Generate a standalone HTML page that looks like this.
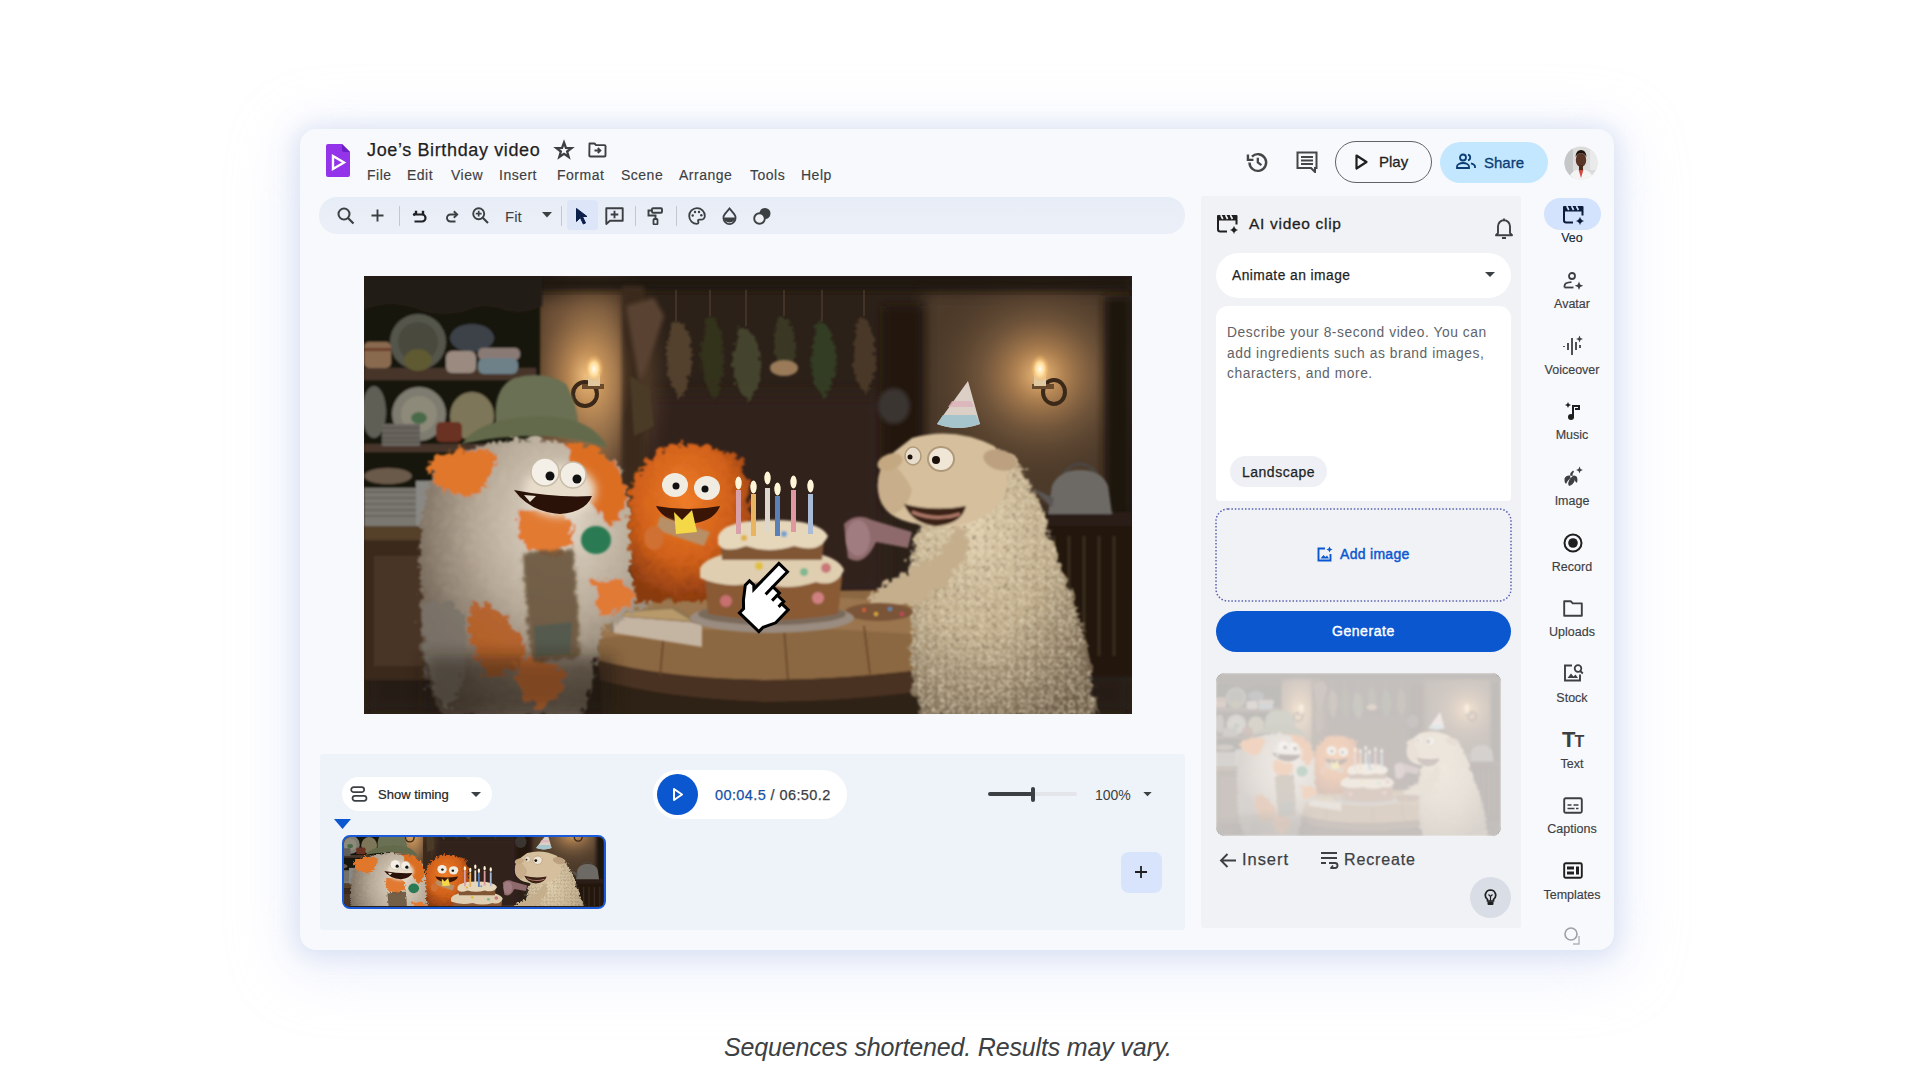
<!DOCTYPE html>
<html><head><meta charset="utf-8">
<style>
*{margin:0;padding:0;box-sizing:border-box}
html,body{width:1920px;height:1080px;overflow:hidden;background:#fff;font-family:"Liberation Sans",sans-serif;color:#1f1f1f}
.a{position:absolute}
.t{position:absolute;white-space:nowrap;line-height:1}
#win{left:300px;top:129px;width:1314px;height:821px;border-radius:16px;background:#f8f9fc;
 box-shadow:0 2px 22px 4px rgba(196,210,236,.55),0 12px 60px 12px rgba(205,216,245,.35)}
#toolbar{left:319px;top:197px;width:866px;height:37px;border-radius:18px;background:linear-gradient(180deg,#e7edf6,#ebeff8)}
#rpanel{left:1201px;top:196px;width:320px;height:732px;border-radius:3px;background:#f1f2f6}
#tl{left:320px;top:754px;width:865px;height:176px;border-radius:3px;background:#eef2f9}
svg{display:block}
.menu{font-size:14px;color:#3c4043;letter-spacing:.5px;-webkit-text-stroke:.15px #3c4043}
.rl{font-size:12.5px;color:#3c4043;text-align:center;-webkit-text-stroke:.15px #3c4043}
</style></head><body>
<div id="win" class="a"></div>
<div id="toolbar" class="a"></div>
<div id="rpanel" class="a"></div>
<div id="tl" class="a"></div>

<!-- logo -->
<svg class="a" style="left:326px;top:144px" width="24" height="33" viewBox="0 0 24 33">
 <defs><linearGradient id="lg" x1="0" y1="0" x2="1" y2="1"><stop offset="0" stop-color="#8a2ee8"/><stop offset="1" stop-color="#a035f0"/></linearGradient></defs>
 <path d="M2 0H16L24 8V31Q24 33 22 33H2Q0 33 0 31V2Q0 0 2 0Z" fill="#9333ea"/>
 <path d="M16 0L24 8H18Q16 8 16 6Z" fill="#6d1fc7"/>
 <path d="M7 12L18 18.5L7 25Z" fill="none" stroke="#fff" stroke-width="2.4" stroke-linejoin="miter"/>
</svg>
<div class="t" id="title" style="left:367px;top:141px;font-size:18px;color:#1f1f1f;letter-spacing:.63px;-webkit-text-stroke:.25px #1f1f1f">Joe’s Birthday video</div>
<!-- star -->
<svg class="a" style="left:552px;top:139px" width="24" height="22" viewBox="0 0 24 22"><polygon points="12.00,3.50 13.94,8.83 19.61,9.03 15.14,12.52 16.70,17.97 12.00,14.80 7.30,17.97 8.86,12.52 4.39,9.03 10.06,8.83" fill="none" stroke="#3c4043" stroke-width="2.3" stroke-linejoin="miter" stroke-miterlimit="6"/></svg>
<!-- folder move -->
<svg class="a" style="left:587px;top:141px" width="20" height="18" viewBox="0 0 20 18"><path d="M2.5 2.5H7.5l1.5 1.6h8.5q1 0 1 1V14.5q0 1-1 1H3.3q-1 0-1-1z" fill="none" stroke="#3c4043" stroke-width="1.9" stroke-linejoin="round"/><path d="M7.5 9.5h5.5M10.8 7l2.6 2.5-2.6 2.5" fill="none" stroke="#3c4043" stroke-width="1.8"/></svg>
<!-- menu -->
<div class="t menu" style="left:367px;top:168px">File</div>
<div class="t menu" style="left:407px;top:168px">Edit</div>
<div class="t menu" style="left:451px;top:168px">View</div>
<div class="t menu" style="left:499px;top:168px">Insert</div>
<div class="t menu" style="left:557px;top:168px">Format</div>
<div class="t menu" style="left:621px;top:168px">Scene</div>
<div class="t menu" style="left:679px;top:168px">Arrange</div>
<div class="t menu" style="left:750px;top:168px">Tools</div>
<div class="t menu" style="left:801px;top:168px">Help</div>
<!-- history -->
<svg class="a" style="left:1245px;top:150px" width="25" height="25" viewBox="0 0 24 24"><path d="M4.3 12a8 8 0 1 0 2.4-5.7" fill="none" stroke="#444746" stroke-width="2.3"/><path d="M2.8 4.2v5.3h5.3" fill="none" stroke="#444746" stroke-width="2.3"/><path d="M12.3 7.5V12l3.5 2.5" fill="none" stroke="#444746" stroke-width="2.2"/></svg>
<!-- comment -->
<svg class="a" style="left:1296px;top:151px" width="22" height="22" viewBox="0 0 22 22"><path d="M1.5 1.5h19v15.5h-1.5v4l-4-4H1.5z" fill="none" stroke="#444746" stroke-width="2"/><path d="M5 6h12M5 9.5h12M5 13h12" stroke="#444746" stroke-width="1.8"/></svg>
<!-- Play btn -->
<div class="a" style="left:1335px;top:141px;width:97px;height:42px;border:1.3px solid #5f6368;border-radius:21px"></div>
<svg class="a" style="left:1355px;top:154px" width="13" height="16" viewBox="0 0 13 16"><path d="M1.5 1.5L11.5 8L1.5 14.5Z" fill="none" stroke="#1f1f1f" stroke-width="2.2" stroke-linejoin="round"/></svg>
<div class="t" id="playtxt" style="left:1379px;top:154px;font-size:15px;color:#1f1f1f;-webkit-text-stroke:.3px #1f1f1f">Play</div>
<!-- Share btn -->
<div class="a" style="left:1440px;top:142px;width:108px;height:41px;border-radius:21px;background:#c2e7ff"></div>
<svg class="a" style="left:1456px;top:153px" width="20" height="16" viewBox="0 0 20 16"><circle cx="7" cy="4.5" r="3" fill="none" stroke="#0b3d75" stroke-width="1.8"/><path d="M1 15v-1.5c0-2 3-3.5 6-3.5s6 1.5 6 3.5V15z" fill="none" stroke="#0b3d75" stroke-width="1.8"/><path d="M12 1.6a3 3 0 0 1 0 5.8M15 10.3c2 .6 4 1.6 4 3.2V15" fill="none" stroke="#0b3d75" stroke-width="1.8"/></svg>
<div class="t" id="sharetxt" style="left:1484px;top:155px;font-size:15px;color:#0b3d75;-webkit-text-stroke:.3px #0b3d75">Share</div>
<!-- avatar -->
<svg class="a" style="left:1564px;top:146px" width="34" height="34" viewBox="0 0 34 34"><defs><clipPath id="avc"><circle cx="17" cy="17" r="16.5"/></clipPath></defs>
<g clip-path="url(#avc)"><rect width="34" height="34" fill="#dcdcdc"/><rect x="0" y="0" width="9" height="34" fill="#c4c6c8"/><rect x="26" y="4" width="8" height="20" fill="#eaeaea"/>
<path d="M4 34 Q6 24 17 23 Q28 24 30 34Z" fill="#f4f4f4"/><path d="M14.5 23.5 L17 32 L19.5 23.5Z" fill="#d04a40"/>
<ellipse cx="17" cy="14" rx="5.2" ry="7" fill="#5a3424"/><path d="M11.5 11 Q12 4 17 4 Q22 4 22.5 11 Q20 7 17 7 Q14 7 11.5 11Z" fill="#1e120c"/><rect x="15" y="19" width="4" height="5" fill="#4a2a1c"/></g></svg>

<!-- toolbar icons -->
<svg class="a" style="left:336px;top:206px" width="20" height="20" viewBox="0 0 20 20"><circle cx="8" cy="8" r="5.5" fill="none" stroke="#3c4043" stroke-width="2"/><path d="M12 12l5.5 5.5" stroke="#3c4043" stroke-width="2.2"/></svg>
<svg class="a" style="left:371px;top:209px" width="13" height="13" viewBox="0 0 13 13"><path d="M6.5 0.5v12M0.5 6.5h12" stroke="#3c4043" stroke-width="1.9"/></svg>
<div class="a" style="left:399px;top:206px;width:1px;height:20px;background:#c4c7cc"></div>
<svg class="a" style="left:411px;top:207px" width="16" height="17" viewBox="0 0 16 17"><path d="M5 3.8v4.2M12 3.8v4.2" stroke="#202124" stroke-width="2.4"/><path d="M2 7.5H11a3.5 3.5 0 0 1 0 7H3.5" fill="none" stroke="#202124" stroke-width="2.2"/><path d="M1.5 7.5l2.5-1.8v3.6z" fill="#202124"/></svg>
<svg class="a" style="left:444px;top:207px" width="16" height="17" viewBox="0 0 16 17"><path d="M13 7.5H6.5a3.5 3.5 0 0 0 0 7H11.5" fill="none" stroke="#3c4043" stroke-width="1.9"/><path d="M9.8 4.2L13.2 7.5L9.8 10.8" fill="none" stroke="#3c4043" stroke-width="1.9"/></svg>
<svg class="a" style="left:472px;top:207px" width="17" height="17" viewBox="0 0 17 17"><circle cx="6.7" cy="6.7" r="5.5" fill="none" stroke="#3c4043" stroke-width="1.9"/><path d="M10.5 10.5l5.5 5.5" stroke="#3c4043" stroke-width="2.1"/><path d="M6.7 3.8v5.8M3.8 6.7h5.8" stroke="#3c4043" stroke-width="1.7"/></svg>
<div class="t" style="left:505px;top:209px;font-size:15px;color:#3c4043">Fit</div>
<svg class="a" style="left:542px;top:212px" width="10" height="6" viewBox="0 0 10 6"><path d="M0 0h10L5 5.5z" fill="#3c4043"/></svg>
<div class="a" style="left:561px;top:206px;width:1px;height:20px;background:#c4c7cc"></div>
<div class="a" style="left:567px;top:200px;width:31px;height:30px;border-radius:4px;background:#dde5f8"></div>
<svg class="a" style="left:575px;top:207px" width="14" height="18" viewBox="0 0 14 18"><path d="M1.5 1.5L12 9.5H7.5L10.5 16l-2.2 1L5.3 10.6 1.5 14.5z" fill="#0b1f4a" stroke="#0b1f4a" stroke-width="1" stroke-linejoin="round"/></svg>
<svg class="a" style="left:605px;top:207px" width="19" height="18" viewBox="0 0 19 18"><path d="M1.3 1.3h16.4v12.5H5L1.3 17z" fill="none" stroke="#3c4043" stroke-width="1.9" stroke-linejoin="round"/><path d="M9.5 3.8v7.5M5.7 7.5h7.6" stroke="#3c4043" stroke-width="1.9"/></svg>
<div class="a" style="left:635px;top:206px;width:1px;height:20px;background:#c4c7cc"></div>
<svg class="a" style="left:647px;top:207px" width="16" height="18" viewBox="0 0 16 18"><rect x="5" y="1.2" width="10" height="4.6" rx="1" fill="none" stroke="#3c4043" stroke-width="1.9"/><path d="M5 3.5H1.5v5h7v3.5" fill="none" stroke="#3c4043" stroke-width="1.9"/><rect x="6.5" y="12" width="4" height="5.3" rx=".8" fill="none" stroke="#3c4043" stroke-width="1.8"/></svg>
<div class="a" style="left:676px;top:206px;width:1px;height:20px;background:#c4c7cc"></div>
<svg class="a" style="left:688px;top:207px" width="18" height="18" viewBox="0 0 18 18"><path d="M9 1.2a7.8 7.8 0 0 0 0 15.6c1 0 1.5-.7 1.5-1.5 0-.5-.3-.8-.4-1.2-.3-.7.2-1.5 1-1.5h2a3.7 3.7 0 0 0 3.7-3.7C16.8 4.5 13.3 1.2 9 1.2z" fill="none" stroke="#3c4043" stroke-width="1.8"/><circle cx="4.7" cy="8.5" r="1.2" fill="#3c4043"/><circle cx="7" cy="5" r="1.2" fill="#3c4043"/><circle cx="11" cy="5" r="1.2" fill="#3c4043"/><circle cx="13.3" cy="8.3" r="1.2" fill="#3c4043"/></svg>
<svg class="a" style="left:722px;top:207px" width="15" height="18" viewBox="0 0 15 18"><path d="M7.5 1.5L2.8 7.2a6 6 0 1 0 9.4 0z" fill="none" stroke="#3c4043" stroke-width="1.9"/><path d="M1.6 10.5h11.8a6 6 0 0 1-11.8 0z" fill="#3c4043"/></svg>
<svg class="a" style="left:753px;top:207px" width="19" height="18" viewBox="0 0 19 18"><circle cx="12" cy="6.5" r="5.5" fill="#3c4043"/><circle cx="6.5" cy="11.5" r="5.3" fill="#eef0f6" stroke="#3c4043" stroke-width="1.9"/></svg>
<svg width="0" height="0" style="position:absolute">
<defs>
<filter id="bl1" x="-20%" y="-20%" width="140%" height="140%"><feGaussianBlur stdDeviation="1"/></filter>
<filter id="bl2" x="-20%" y="-20%" width="140%" height="140%"><feGaussianBlur stdDeviation="2"/></filter>
<filter id="bl4" x="-30%" y="-30%" width="160%" height="160%"><feGaussianBlur stdDeviation="4"/></filter>
<filter id="bl8" x="-50%" y="-50%" width="200%" height="200%"><feGaussianBlur stdDeviation="8"/></filter>
<filter id="fur" x="-20%" y="-20%" width="140%" height="140%"><feTurbulence type="turbulence" baseFrequency="0.09" numOctaves="2" seed="3"/><feDisplacementMap in="SourceGraphic" scale="14" xChannelSelector="R" yChannelSelector="G"/><feGaussianBlur stdDeviation="1.2"/></filter>
<filter id="furS" x="-20%" y="-20%" width="140%" height="140%"><feTurbulence type="turbulence" baseFrequency="0.15" numOctaves="2" seed="7"/><feDisplacementMap in="SourceGraphic" scale="8" xChannelSelector="R" yChannelSelector="G"/><feGaussianBlur stdDeviation=".8"/></filter>
<radialGradient id="glowL" cx="0.5" cy="0.5" r="0.5"><stop offset="0" stop-color="#e8b878"/><stop offset=".25" stop-color="#b88c5c" stop-opacity=".9"/><stop offset=".6" stop-color="#7a5a3c" stop-opacity=".6"/><stop offset="1" stop-color="#4a3424" stop-opacity="0"/></radialGradient>
<radialGradient id="glowR" cx="0.5" cy="0.5" r="0.5"><stop offset="0" stop-color="#d8a870"/><stop offset=".25" stop-color="#a07850" stop-opacity=".85"/><stop offset=".6" stop-color="#6a5038" stop-opacity=".55"/><stop offset="1" stop-color="#3e2d20" stop-opacity="0"/></radialGradient>
<radialGradient id="flame" cx="0.5" cy="0.6" r="0.5"><stop offset="0" stop-color="#fffdf0"/><stop offset=".45" stop-color="#ffdc98"/><stop offset="1" stop-color="#e8a050" stop-opacity="0"/></radialGradient>
<radialGradient id="furW" cx="0.6" cy="0.3" r="0.8"><stop offset="0" stop-color="#e4dacb"/><stop offset=".45" stop-color="#b6a896"/><stop offset="1" stop-color="#54483c"/></radialGradient>
<radialGradient id="furO" cx="0.45" cy="0.35" r="0.65"><stop offset="0" stop-color="#f07d28"/><stop offset=".6" stop-color="#d0601a"/><stop offset="1" stop-color="#8a3a10"/></radialGradient>
<radialGradient id="wool" cx="0.35" cy="0.3" r="0.8"><stop offset="0" stop-color="#dccaa8"/><stop offset=".5" stop-color="#bba886"/><stop offset="1" stop-color="#6e5e4a"/></radialGradient>
<linearGradient id="tableG" x1="0" y1="0" x2="0" y2="1"><stop offset="0" stop-color="#8e6a46"/><stop offset=".55" stop-color="#76543a"/><stop offset=".75" stop-color="#4a321f"/><stop offset="1" stop-color="#2e1f14"/></linearGradient>
<pattern id="curls" width="10" height="10" patternUnits="userSpaceOnUse"><circle cx="5" cy="5" r="3.2" fill="none" stroke="#f2e6cc" stroke-width="1.4" opacity=".6"/><circle cx="0" cy="0" r="2.8" fill="none" stroke="#6e5c46" stroke-width="1.3" opacity=".55"/><circle cx="10" cy="10" r="2.8" fill="none" stroke="#6e5c46" stroke-width="1.3" opacity=".55"/></pattern>
<symbol id="photo" viewBox="0 0 768 438" preserveAspectRatio="none">
 <rect width="768" height="438" fill="#2c2119"/>
 <g filter="url(#bl8)">
  <rect x="0" y="0" width="178" height="438" fill="#231912"/>
  <rect x="174" y="24" width="80" height="250" fill="#6a4e34"/>
  <rect x="280" y="120" width="240" height="200" fill="#30241b"/>
  <rect x="560" y="16" width="200" height="215" fill="#4e3a2a"/>
  <rect x="0" y="395" width="768" height="43" fill="#251a12"/>
 </g>
 <ellipse cx="229" cy="105" rx="80" ry="150" fill="url(#glowL)"/>
 <ellipse cx="676" cy="100" rx="130" ry="120" fill="url(#glowR)"/>
 <rect x="0" y="0" width="768" height="14" fill="#1e150f" filter="url(#bl4)"/>
 <!-- beams -->
 <rect x="258" y="10" width="22" height="270" fill="#3a2a1c" filter="url(#bl2)"/>
 <path d="M262 30 L290 22 L300 40 L276 110Z" fill="#5a4230" filter="url(#bl2)"/>
 <rect x="519" y="30" width="40" height="200" fill="#21170f" filter="url(#bl4)"/>
 <ellipse cx="530" cy="130" rx="16" ry="18" fill="#3a3430" filter="url(#bl2)"/>
 <rect x="740" y="20" width="28" height="300" fill="#1e150f" filter="url(#bl4)"/>
 <!-- shelves -->
 <g filter="url(#bl1)">
  <rect x="0" y="0" width="176" height="270" fill="#18120d"/>
  <path d="M0 0H178V30Q160 40 140 34Q120 26 100 36Q70 42 50 32Q25 24 0 34Z" fill="#241a12"/>
  <rect x="0" y="92" width="172" height="12" fill="#46362a"/>
  <rect x="0" y="168" width="172" height="8" fill="#46362a"/>
  <rect x="0" y="250" width="180" height="14" fill="#54402c"/>
  <rect x="0" y="264" width="165" height="140" fill="#3a2a1e"/>
  <rect x="10" y="280" width="52" height="110" fill="#4a3626"/>
  <rect x="72" y="280" width="52" height="110" fill="#4a3626"/>
  <ellipse cx="54" cy="66" rx="28" ry="28" fill="#55564c"/>
  <ellipse cx="54" cy="66" rx="20" ry="20" fill="#48483e"/>
  <ellipse cx="108" cy="62" rx="22" ry="14" fill="#3c4248"/>
  <rect x="0" y="66" width="27" height="26" rx="5" fill="#8a6a50"/>
  <rect x="0" y="72" width="27" height="3" fill="#6a3a28"/>
  <ellipse cx="54" cy="84" rx="14" ry="11" fill="#5e5a30"/>
  <rect x="82" y="75" width="30" height="22" rx="6" fill="#9a8a80"/>
  <rect x="114" y="72" width="42" height="12" rx="5" fill="#8a7a74"/>
  <rect x="114" y="82" width="40" height="16" rx="6" fill="#6e8088"/>
  <ellipse cx="10" cy="136" rx="12" ry="26" fill="#5e5e56"/>
  <ellipse cx="55" cy="138" rx="27" ry="27" fill="#7e7c70"/>
  <ellipse cx="55" cy="138" rx="18" ry="18" fill="#8e8a7a"/>
  <ellipse cx="55" cy="142" rx="8" ry="6" fill="#4a6a48"/>
  <ellipse cx="108" cy="140" rx="22" ry="24" fill="#7e7658"/>
  <rect x="18" y="148" width="38" height="22" fill="#6a6660"/>
  <path d="M18 152H56M18 157H56M18 162H56M18 166H56" stroke="#4a4640" stroke-width="1"/>
  <rect x="72" y="146" width="26" height="20" rx="5" fill="#6a3020"/>
  <rect x="0" y="212" width="55" height="38" fill="#7a7870"/>
  <path d="M0 216H55M0 222H55M0 228H55M0 234H55M0 240H55" stroke="#55534c" stroke-width="1"/>
  <ellipse cx="24" cy="200" rx="24" ry="8" fill="#6a5a48"/>
  <rect x="52" y="205" width="20" height="45" fill="#8a8884"/>
 </g>
 <!-- herbs -->
 <g stroke="#4a3a2a" stroke-width="1.5">
  <path d="M312 14V45M346 14V40M382 14V50M420 14V40M458 14V45M500 14V40"/>
 </g>
 <g filter="url(#furS)" opacity=".85">
  <path d="M306 45 Q318 40 324 60 Q330 95 314 122 Q298 100 300 70Z" fill="#5a4630"/>
  <path d="M340 40 Q352 36 356 60 Q362 100 348 124 Q332 100 336 66Z" fill="#34361f"/>
  <path d="M372 50 Q386 46 392 70 Q400 100 382 124 Q364 104 368 76Z" fill="#4a4c30"/>
  <path d="M412 40 Q424 36 428 56 Q434 80 420 96 Q406 84 408 60Z" fill="#3e3e28"/>
  <path d="M450 45 Q462 40 468 66 Q474 100 458 120 Q442 104 446 72Z" fill="#344226"/>
  <path d="M492 40 Q504 36 508 62 Q514 96 500 116 Q484 100 488 66Z" fill="#503c2a"/>
 </g>
 <g filter="url(#bl1)"><ellipse cx="420" cy="92" rx="14" ry="8" fill="#9a7a58"/>
  <path d="M266 100 L285 110 L290 150 L270 160Z" fill="#4a3a28"/></g>
 <!-- lamps -->
 <radialGradient id="hot" cx="0.5" cy="0.5" r="0.5"><stop offset="0" stop-color="#f0c080" stop-opacity=".95"/><stop offset=".4" stop-color="#c08a50" stop-opacity=".55"/><stop offset="1" stop-color="#805a38" stop-opacity="0"/></radialGradient>
 <ellipse cx="222" cy="100" rx="48" ry="70" fill="url(#hot)"/>
 <ellipse cx="676" cy="98" rx="60" ry="60" fill="url(#hot)" opacity=".8"/>
 
 <ellipse cx="221" cy="118" rx="12" ry="12" fill="none" stroke="#3a2818" stroke-width="4"/>
 <rect x="218" y="108" width="22" height="5" fill="#6a4a2c"/>
 <rect x="224" y="98" width="12" height="12" fill="#e0c8a0"/>
 <ellipse cx="230" cy="90" rx="10" ry="15" fill="url(#flame)"/>
 <ellipse cx="690" cy="116" rx="11" ry="12" fill="none" stroke="#3a2818" stroke-width="4"/>
 <rect x="668" y="108" width="22" height="5" fill="#6a4a2c"/>
 <rect x="670" y="98" width="12" height="12" fill="#e0c8a0"/>
 <ellipse cx="676" cy="90" rx="10" ry="15" fill="url(#flame)"/>
 <!-- kettle & counter -->
 <g filter="url(#bl1)">
  <rect x="590" y="236" width="178" height="14" fill="#2a1f17"/>
  <rect x="680" y="250" width="88" height="150" fill="#231811"/>
  <path d="M690 260V380M705 260V380M720 260V380M735 260V380M750 260V380" stroke="#3a2c22" stroke-width="3"/>
  <path d="M688 210 Q695 194 716 194 Q738 194 744 210 L748 238 L684 238Z" fill="#6d6a66"/>
  <path d="M700 196 Q716 180 732 196" fill="none" stroke="#4a4744" stroke-width="3"/>
  <path d="M668 212 L690 222 L688 232Z" fill="#5a5754"/>
  <rect x="610" y="190" width="26" height="46" rx="4" fill="#3c2c20"/>
 </g>
 <!-- table -->
 <g filter="url(#bl1)">
  <path d="M232 336 Q240 318 330 316 L540 314 Q572 318 574 340 L572 392 Q480 404 400 404 Q290 402 234 386Z" fill="#8c6842"/>
  <path d="M240 330 Q300 322 400 320 Q500 320 566 330 L570 360 Q480 352 400 352 Q300 354 238 362Z" fill="#9e7850" opacity=".8"/>
  <path d="M234 384 Q300 402 400 404 Q490 404 572 392 L570 414 Q480 426 400 426 Q290 422 236 404Z" fill="#4a3220"/>
  <path d="M236 404 Q300 422 400 426 Q490 426 570 414 L568 438 L238 438Z" fill="#2e2016"/>
  <path d="M300 356 L296 400M420 352 L424 404M500 350 L506 398" stroke="#5e4028" stroke-width="1.5"/>
 </g>
 <!-- matchbox -->
 <g filter="url(#bl1)">
  <path d="M250 340 L338 347 L338 371 L250 357Z" fill="#c4b4a2"/>
  <path d="M256 334 L311 331 L338 347 L250 340Z" fill="#8e7452"/>
  <path d="M262 336 L308 333 L328 345 L258 340Z" fill="#b89a6a"/>
  <path d="M250 340 L250 357 L246 354 L246 338Z" fill="#8a7a68"/>
 </g>
 <!-- left monster -->
 <g filter="url(#fur)">
  <path d="M64 196 Q84 166 140 160 Q222 154 254 190 Q268 236 264 296 Q278 318 282 324 Q250 340 236 350 Q226 400 214 438 L74 438 Q48 392 54 322 Q46 258 64 196Z" fill="url(#furW)"/>
  <path d="M58 186 Q82 164 126 172 Q132 196 108 214 Q78 222 58 186Z" fill="#e0772a"/>
  <path d="M196 162 Q244 166 258 204 Q262 236 244 246 Q214 224 196 162Z" fill="#dc6e24"/>
  <path d="M150 232 Q180 226 204 240 Q210 266 190 276 Q160 278 150 256Z" fill="#e27a30"/>
  <path d="M104 322 Q142 326 160 372 Q150 398 118 396 Q96 360 104 322Z" fill="#b85c1e" opacity=".85"/>
  <path d="M56 330 Q74 310 96 334 Q104 392 82 430 Q54 410 56 330Z" fill="#7a7268" opacity=".9"/>
  <path d="M226 300 Q256 296 268 318 Q258 336 232 334Z" fill="#e07a34"/>
  <path d="M150 380 Q180 374 198 394 Q196 424 170 428 Q146 416 150 380Z" fill="#d27030"/>
 </g>
 <g filter="url(#bl1)">
  <path d="M156 276 L208 270 L214 380 L166 384Z" fill="#6a563e" opacity=".9" filter="url(#furS)"/>
  <path d="M170 350 L208 346 L206 378 L172 380Z" fill="#3e5a58" opacity=".5"/>
 </g>
 <rect x="60" y="380" width="190" height="58" fill="#1e150e" opacity=".45" filter="url(#bl8)"/>
 <ellipse cx="232" cy="264" rx="15" ry="14" fill="#2a7a52" filter="url(#bl1)"/>
 <!-- hat -->
 <g filter="url(#bl1)">
  <path d="M132 150 Q128 112 150 102 Q180 94 202 108 Q214 130 214 150Z" fill="#6a7052"/>
  <path d="M98 168 Q115 142 175 140 Q228 140 244 172 Q205 160 175 160 Q130 160 98 168Z" fill="#646a4c"/>
 </g>
 <!-- left monster face -->
 <ellipse cx="196" cy="215" rx="36" ry="26" fill="#e8dccb" filter="url(#bl4)"/>
 <ellipse cx="181" cy="196" rx="14" ry="14" fill="#f4f0e8" stroke="#c8bca8" stroke-width="1.5"/>
 <ellipse cx="209" cy="199" rx="13" ry="13" fill="#f2eee6" stroke="#c8bca8" stroke-width="1.5"/>
 <circle cx="186" cy="200" r="4.5" fill="#111"/>
 <circle cx="213" cy="203" r="4.5" fill="#111"/>
 <path d="M150 214 Q190 222 228 220 Q222 236 196 238 Q166 236 150 214Z" fill="#2a1208"/><path d="M160 219 L166 226 L172 220Z" fill="#e8e0d0"/>
 <!-- orange monster -->
 <g filter="url(#fur)">
  <path d="M262 250 Q256 190 296 170 Q336 156 372 178 Q388 210 382 260 Q380 300 372 322 L268 322 Q262 290 262 250Z" fill="url(#furO)"/>
 </g>
 <ellipse cx="311" cy="209" rx="13" ry="12" fill="#f1ece2"/>
 <ellipse cx="343" cy="212" rx="13" ry="12" fill="#f1ece2"/>
 <circle cx="312" cy="210" r="3.5" fill="#111"/>
 <circle cx="341" cy="213" r="3.5" fill="#111"/>
 <path d="M292 230 Q325 236 356 230 Q350 246 325 248 Q300 246 292 230Z" fill="#3a1506"/>
 <path d="M296 240 L346 256 L340 270 L292 254Z" fill="#b89068" filter="url(#bl1)"/>
 <path d="M310 236 L318 244 L328 234 L333 256 L312 258Z" fill="#f4d848"/>
 <ellipse cx="290" cy="262" rx="10" ry="12" fill="#d07030" filter="url(#bl1)"/>
 <!-- sheep -->
 <g filter="url(#fur)">
  <path d="M570 185 Q610 155 648 180 Q676 222 690 280 Q720 340 730 438 L556 438 Q540 400 546 350 Q536 300 550 252Z" fill="url(#wool)"/>
 </g>
 <path d="M570 185 Q610 155 648 180 Q676 222 690 280 Q720 340 730 438 L556 438 Q540 400 546 350 Q536 300 550 252Z" fill="url(#curls)" filter="url(#furS)"/>
 <g filter="url(#fur)">
  <path d="M500 318 Q520 300 548 290 Q575 276 590 246 Q604 250 600 270 Q590 300 560 318 Q535 330 505 330Z" fill="#c4ae8c"/>
 </g>
 <g filter="url(#bl1)">
  <path d="M548 162 Q590 150 630 170 Q650 190 640 222 Q622 246 590 250 Q560 252 538 244 Q516 236 514 214 Q512 190 530 176Z" fill="#d6bf9c"/>
  <path d="M514 214 Q512 194 526 186 Q540 196 548 214 Q544 232 530 238 Q516 232 514 214Z" fill="#c8ae8a"/>
  <ellipse cx="526" cy="186" rx="13" ry="8" fill="#c4a882" transform="rotate(-20 526 186)"/>
  <ellipse cx="636" cy="184" rx="17" ry="10" fill="#bca080" transform="rotate(15 636 184)"/>
  <path d="M540 228 Q570 236 602 230 Q598 248 572 250 Q548 248 540 228Z" fill="#3a2014"/>
  <path d="M548 236 Q572 246 596 238" fill="none" stroke="#b07a6a" stroke-width="3"/>
 </g>
 <ellipse cx="577" cy="183" rx="13" ry="12" fill="#efe6d6" stroke="#b09a7a" stroke-width="2"/>
 <circle cx="572" cy="184" r="4" fill="#1a1008"/>
 <ellipse cx="549" cy="180" rx="8" ry="9" fill="#e8dece" stroke="#b09a7a" stroke-width="1.5"/>
 <circle cx="546" cy="181" r="2.5" fill="#1a1008"/>
 <!-- party hat -->
 <path d="M604 105 L573 148 Q594 156 616 148Z" fill="#dccfc6"/>
 <path d="M579 139 L612 139 L616 148 Q594 156 573 148Z" fill="#a6c4cc"/>
 <path d="M588 125 L607 125 L610 131 L584 131Z" fill="#dcb0b8" opacity=".8"/>
 <!-- party horn -->
 <path d="M480 248 Q492 236 508 244 L548 256 L544 272 L512 266 Q500 292 484 282Z" fill="#8e6a6c" filter="url(#bl1)"/>
 <ellipse cx="494" cy="262" rx="12" ry="18" fill="#a07c80" filter="url(#bl1)"/>
 <!-- confetti -->
 <g filter="url(#bl1)">
  <ellipse cx="515" cy="336" rx="34" ry="9" fill="#7a5438"/>
  <circle cx="500" cy="334" r="2" fill="#d86040"/><circle cx="512" cy="338" r="2" fill="#e0b040"/><circle cx="526" cy="333" r="2" fill="#5a90c0"/><circle cx="538" cy="338" r="2" fill="#d04060"/>
 </g>
 <!-- cake -->
 <g filter="url(#bl1)">
  <ellipse cx="408" cy="342" rx="82" ry="15" fill="#9a8c80"/>
  <ellipse cx="408" cy="338" rx="74" ry="11" fill="#7a6a5c"/>
  <path d="M340 292 Q340 282 360 282 L458 282 Q478 286 478 302 L474 338 Q410 350 344 338Z" fill="#8a5a36"/>
  <path d="M336 292 Q345 274 410 274 Q472 274 480 294 Q472 312 452 306 Q422 316 396 306 Q364 314 336 302Z" fill="#e0ceb0"/>
  <path d="M356 260 Q364 247 408 247 Q455 247 460 264 L458 284 L358 284Z" fill="#805636"/>
  <path d="M354 260 Q360 244 408 244 Q456 244 464 260 Q456 278 430 270 Q405 278 382 270 Q360 278 354 268Z" fill="#e6d6ba"/>
  <circle cx="362" cy="325" r="6" fill="#c87070"/>
  <circle cx="454" cy="322" r="6" fill="#d08080"/>
  <circle cx="462" cy="292" r="5" fill="#c87878"/>
  <circle cx="395" cy="290" r="4" fill="#e0c040"/>
  <circle cx="440" cy="296" r="4" fill="#80b890"/>
  <circle cx="380" cy="262" r="3" fill="#e0b040"/>
  <circle cx="420" cy="258" r="3" fill="#70a0d0"/>
 </g>
 <!-- candles -->
 <g>
  <rect x="372" y="214" width="5" height="44" fill="#d8a0a8"/>
  <rect x="387" y="218" width="5" height="42" fill="#e8b460"/>
  <rect x="401" y="212" width="5" height="44" fill="#dcd8d0"/>
  <rect x="411" y="220" width="5" height="40" fill="#5a80b8"/>
  <rect x="427" y="214" width="5" height="42" fill="#e098a0"/>
  <rect x="444" y="218" width="5" height="40" fill="#a8bcd8"/>
  <ellipse cx="374.5" cy="207" rx="3.2" ry="6.5" fill="#fff6d8"/>
  <ellipse cx="389.5" cy="211" rx="3.2" ry="6.5" fill="#fff6d8"/>
  <ellipse cx="403.5" cy="202" rx="3.2" ry="6.5" fill="#fff6d8"/>
  <ellipse cx="413.5" cy="213" rx="3.2" ry="6.5" fill="#fff6d8"/>
  <ellipse cx="429.5" cy="206" rx="3.2" ry="6.5" fill="#fff6d8"/>
  <ellipse cx="446.5" cy="210" rx="3.2" ry="6.5" fill="#fff6d8"/>
 </g>
</symbol>
</defs></svg>

<!-- main photo -->
<svg class="a" style="left:364px;top:276px" width="768" height="438" viewBox="0 0 768 438"><use href="#photo" width="768" height="438"/><!-- cursor hand -->
 <g transform="translate(402.7,319.4) rotate(44) scale(3) translate(-8.5,-10.5)">
  <path d="M4 0H8V7H11V8H14V9H17V15L15 19V21H6V19L4 17L1 13V11H3L4 12Z" fill="#fff" stroke="#000" stroke-width="1" stroke-linejoin="miter"/>
  <path d="M8 7V10.5M11 8V10.5M14 9V10.5" stroke="#000" stroke-width="1"/>
 </g>
</svg>

<!-- timeline controls -->
<div class="a" style="left:342px;top:777px;width:150px;height:34px;border-radius:17px;background:#fff"></div>
<svg class="a" style="left:350px;top:786px" width="18" height="16" viewBox="0 0 18 16"><rect x="1.2" y="1.2" width="13" height="5" rx="2.5" fill="none" stroke="#3c4043" stroke-width="1.7"/><rect x="2.5" y="9.8" width="14" height="5" rx="2.5" fill="none" stroke="#3c4043" stroke-width="1.7"/></svg>
<div class="t" id="stt" style="left:378px;top:788px;font-size:13px;color:#1f1f1f;-webkit-text-stroke:.2px #1f1f1f">Show timing</div>
<svg class="a" style="left:471px;top:792px" width="10" height="6" viewBox="0 0 10 6"><path d="M0 0h10L5 5z" fill="#3c4043"/></svg>

<div class="a" style="left:653px;top:770px;width:194px;height:49px;border-radius:25px;background:#fff"></div>
<div class="a" style="left:657px;top:774px;width:41px;height:41px;border-radius:50%;background:#0b57d0"></div>
<svg class="a" style="left:672px;top:787px" width="12" height="15" viewBox="0 0 12 15"><path d="M2 2L10 7.5L2 13Z" fill="none" stroke="#fff" stroke-width="2" stroke-linejoin="round"/></svg>
<div class="t" id="tc" style="left:715px;top:788px;font-size:14.5px;color:#3c4043;letter-spacing:.4px;-webkit-text-stroke:.25px #3c4043"><span style="color:#0b57d0">00:04.5</span> / 06:50.2</div>

<div class="a" style="left:988px;top:792px;width:89px;height:4px;border-radius:2px;background:#e3e5ea"></div>
<div class="a" style="left:988px;top:792px;width:45px;height:4px;border-radius:2px;background:#3c4043"></div>
<div class="a" style="left:1031px;top:787px;width:4px;height:15px;border-radius:2px;background:#3c4043"></div>
<div class="t" id="pct" style="left:1095px;top:788px;font-size:14px;color:#3c4043">100%</div>
<svg class="a" style="left:1143px;top:792px" width="9" height="5" viewBox="0 0 10 6"><path d="M0 0h10L5 5z" fill="#3c4043"/></svg>

<svg class="a" style="left:334px;top:819px" width="17" height="10" viewBox="0 0 17 10"><path d="M0 0H17L8.5 10Z" fill="#0b57d0"/></svg>
<div class="a" style="left:342px;top:835px;width:264px;height:74px;border-radius:8px;border:2.5px solid #1a5ad8;overflow:hidden;background:#2e2118">
 <svg width="259" height="69" viewBox="38 116 721 199" preserveAspectRatio="none" style="display:block"><use href="#photo" width="768" height="438"/></svg>
</div>
<div class="a" style="left:1121px;top:852px;width:41px;height:41px;border-radius:8px;background:#d8e4fb"></div>
<svg class="a" style="left:1134px;top:865px" width="14" height="14" viewBox="0 0 14 14"><path d="M7 1v12M1 7h12" stroke="#1f1f1f" stroke-width="1.8"/></svg>

<!-- right panel -->
<svg class="a" style="left:1216px;top:214px" width="23" height="21" viewBox="0 0 23 21"><rect x="1" y="1" width="20.5" height="5.5" rx="1" fill="#1f1f1f"/><path d="M4.8 1.2L6.8 5M9.6 1.2L11.6 5M14.4 1.2L16.4 5" stroke="#f1f2f6" stroke-width="1.7"/><path d="M2 6V15.3Q2 17.5 4.2 17.5H11" fill="none" stroke="#1f1f1f" stroke-width="2"/><path d="M20.5 6V10.5" stroke="#1f1f1f" stroke-width="2"/><path d="M18 11.8Q18.7 15.3 22.2 16Q18.7 16.7 18 20.2Q17.3 16.7 13.8 16Q17.3 15.3 18 11.8Z" fill="#1f1f1f"/></svg>
<div class="t" id="aivc" style="left:1249px;top:216px;font-size:15.5px;color:#1f1f1f;letter-spacing:.7px;-webkit-text-stroke:.3px #1f1f1f">AI video clip</div>
<svg class="a" style="left:1494px;top:218px" width="20" height="23" viewBox="0 0 20 23"><path d="M10 2.2a6 6 0 0 0-6 6V15l-2 2.2h16L16 15V8.2a6 6 0 0 0-6-6z" fill="none" stroke="#3c4043" stroke-width="1.9" stroke-linejoin="round"/><path d="M8 20h4" stroke="#3c4043" stroke-width="2"/><path d="M10 0.5v1.8" stroke="#3c4043" stroke-width="1.8"/></svg>

<div class="a" style="left:1216px;top:253px;width:295px;height:45px;border-radius:23px;background:#fff"></div>
<div class="t" id="aai" style="left:1232px;top:269px;font-size:13.8px;color:#1f1f1f;letter-spacing:.45px;-webkit-text-stroke:.25px #1f1f1f">Animate an image</div>
<svg class="a" style="left:1485px;top:272px" width="10" height="5" viewBox="0 0 10 5"><path d="M0 0h10L5 5z" fill="#3c4043"/></svg>

<div class="a" style="left:1216px;top:306px;width:295px;height:195px;border-radius:12px 12px 4px 4px;background:#fff"></div>
<div class="a" id="desc" style="left:1227px;top:323px;width:290px;font-size:13.8px;line-height:20.5px;color:#5f6368;letter-spacing:.55px">Describe your 8-second video. You can<br>add ingredients such as brand images,<br>characters, and more.</div>
<div class="a" style="left:1230px;top:456px;width:97px;height:31px;border-radius:16px;background:#eef0f5"></div>
<div class="t" id="land" style="left:1242px;top:465px;font-size:14px;color:#1f1f1f;letter-spacing:.5px;-webkit-text-stroke:.25px #1f1f1f">Landscape</div>

<svg class="a" style="left:1215px;top:508px" width="297" height="94"><rect x="1" y="1" width="295" height="92" rx="12" fill="none" stroke="#5860b0" stroke-width="1.5" stroke-dasharray="1.5 1.9"/></svg>
<svg class="a" style="left:1316px;top:546px" width="17" height="17" viewBox="0 0 17 17"><path d="M9 2.5H2.5v12h12V8" fill="none" stroke="#0b57d0" stroke-width="1.9"/><path d="M4.5 12.5l3-3.5 2 2 1.5-1.5 2 3z" fill="#0b57d0"/><path d="M13.5 0.5l.9 2.1 2.1.9-2.1.9-.9 2.1-.9-2.1-2.1-.9 2.1-.9z" fill="#0b57d0"/></svg>
<div class="t" id="addimg" style="left:1340px;top:547px;font-size:14px;color:#0b57d0;-webkit-text-stroke:.45px #0b57d0;letter-spacing:.3px">Add image</div>

<div class="a" style="left:1216px;top:611px;width:295px;height:41px;border-radius:21px;background:#0b57d0"></div>
<div class="t" id="gen" style="left:1332px;top:624px;font-size:14px;color:#fff;-webkit-text-stroke:.4px #fff;letter-spacing:.55px">Generate</div>

<div class="a" style="left:1216px;top:673px;width:285px;height:163px;border-radius:9px;overflow:hidden">
 <svg width="285" height="163" viewBox="0 0 768 438" preserveAspectRatio="none" style="display:block;filter:blur(1.2px)"><use href="#photo" width="768" height="438"/></svg>
 <div class="a" style="left:0;top:0;width:285px;height:163px;background:rgba(244,242,240,.76)"></div>
</div>

<svg class="a" style="left:1219px;top:852px" width="18" height="17" viewBox="0 0 18 17"><path d="M17 8.5H2M8.5 2L2 8.5 8.5 15" fill="none" stroke="#3c4043" stroke-width="1.9"/></svg>
<div class="t" id="ins" style="left:1242px;top:851px;font-size:16.5px;color:#3c4043;letter-spacing:.95px;-webkit-text-stroke:.25px #3c4043">Insert</div>
<svg class="a" style="left:1320px;top:851px" width="19" height="18" viewBox="0 0 19 18"><path d="M1 2h16M1 7h16M1 12h5" stroke="#3c4043" stroke-width="1.9"/><path d="M9 12h6a2.5 2.5 0 0 1 0 5h-3" fill="none" stroke="#3c4043" stroke-width="1.9"/><path d="M13 14.5l-2 2.5 2 1" fill="none" stroke="#3c4043" stroke-width="1.7"/></svg>
<div class="t" id="rec" style="left:1344px;top:852px;font-size:16px;color:#3c4043;letter-spacing:.85px;-webkit-text-stroke:.25px #3c4043">Recreate</div>

<div class="a" style="left:1470px;top:877px;width:41px;height:41px;border-radius:50%;background:#d9dee6"></div>
<svg class="a" style="left:1484px;top:889px" width="13" height="17" viewBox="0 0 13 17"><path d="M6.5 1a5.2 5.2 0 0 0-3 9.4V12h6v-1.6A5.2 5.2 0 0 0 6.5 1z" fill="none" stroke="#1f1f1f" stroke-width="1.7"/><path d="M4.5 5.5L6.5 7.5l2-2M6.5 7.5V12" fill="none" stroke="#1f1f1f" stroke-width="1.2"/><rect x="3.5" y="12.5" width="6" height="3.5" rx="1" fill="#1f1f1f"/></svg>

<!-- right rail -->
<div class="a" style="left:1544px;top:198px;width:57px;height:32px;border-radius:16px;background:#d3e3fd"></div>
<svg class="a" style="left:1562px;top:205px" width="23" height="21" viewBox="0 0 23 21"><rect x="1" y="1" width="20.5" height="5.5" rx="1" fill="#0b1d3a"/><path d="M4.8 1.2L6.8 5M9.6 1.2L11.6 5M14.4 1.2L16.4 5" stroke="#d3e3fd" stroke-width="1.7"/><path d="M2 6V15.3Q2 17.5 4.2 17.5H11" fill="none" stroke="#0b1d3a" stroke-width="2"/><path d="M20.5 6V10.5" stroke="#0b1d3a" stroke-width="2"/><path d="M18 11.8Q18.7 15.3 22.2 16Q18.7 16.7 18 20.2Q17.3 16.7 13.8 16Q17.3 15.3 18 11.8Z" fill="#0b1d3a"/></svg>
<div class="t rl" style="left:1552px;top:232px;width:40px;color:#0b1d3a">Veo</div>

<svg class="a" style="left:1563px;top:272px" width="21" height="20" viewBox="0 0 21 20"><circle cx="9" cy="4" r="3" fill="none" stroke="#3c4043" stroke-width="1.8"/><path d="M1.5 15.5v-1.5q0-3.5 7-3.8" fill="none" stroke="#3c4043" stroke-width="1.8"/><path d="M1.5 15.5h9" stroke="#3c4043" stroke-width="1.8"/><path d="M16 9.5l1.2 3 3 1.2-3 1.2-1.2 3-1.2-3-3-1.2 3-1.2z" fill="#3c4043"/></svg>
<div class="t rl" style="left:1542px;top:298px;width:60px">Avatar</div>

<svg class="a" style="left:1562px;top:335px" width="22" height="21" viewBox="0 0 22 21"><path d="M2 11v1M6 8v7M10 3v17M14 7v8M18 10v3" stroke="#3c4043" stroke-width="1.8"/><path d="M17.5 0.5l1 2.5 2.5 1-2.5 1-1 2.5-1-2.5-2.5-1 2.5-1z" fill="#3c4043"/></svg>
<div class="t rl" style="left:1532px;top:364px;width:80px">Voiceover</div>

<svg class="a" style="left:1564px;top:401px" width="18" height="20" viewBox="0 0 18 20"><path d="M9 17V5h6v3h-4" fill="none" stroke="#1f1f1f" stroke-width="2"/><circle cx="7" cy="16" r="3" fill="#1f1f1f"/><path d="M4 1l.9 2.1 2.1.9-2.1.9L4 7l-.9-2.1L1 4l2.1-.9z" fill="#1f1f1f"/></svg>
<div class="t rl" style="left:1542px;top:429px;width:60px">Music</div>

<svg class="a" style="left:1562px;top:466px" width="22" height="21" viewBox="0 0 22 21"><path d="M8 9.5Q4 9 2.5 12.5Q2 16 4 18Q6 14 8.5 12Z" fill="#3c4043"/><path d="M8.5 12Q5 17 7 20Q11 19 12.5 15Q13 12 10.5 10.5Z" fill="#3c4043"/><path d="M10 10Q13 8.5 15 11Q16 14 15 17Q12.5 15 11.5 12Z" fill="#3c4043"/><path d="M8 9.5Q8.5 6 11 4.5L12 5.5Q10.5 7.5 10.5 10Z" fill="#3c4043"/><path d="M17.5 0.5l1 2.4 2.4 1-2.4 1-1 2.4-1-2.4-2.4-1 2.4-1z" fill="#3c4043"/></svg>
<div class="t rl" style="left:1542px;top:495px;width:60px">Image</div>

<svg class="a" style="left:1563px;top:533px" width="20" height="20" viewBox="0 0 20 20"><circle cx="10" cy="10" r="8.5" fill="none" stroke="#1f1f1f" stroke-width="2"/><circle cx="10" cy="10" r="4.8" fill="#1f1f1f"/></svg>
<div class="t rl" style="left:1542px;top:561px;width:60px">Record</div>

<svg class="a" style="left:1563px;top:600px" width="20" height="17" viewBox="0 0 20 17"><path d="M1.2 1.2h6.5l2 2.2h9.1v12.4H1.2z" fill="none" stroke="#3c4043" stroke-width="1.9" stroke-linejoin="round"/></svg>
<div class="t rl" style="left:1542px;top:626px;width:60px">Uploads</div>

<svg class="a" style="left:1563px;top:663px" width="21" height="20" viewBox="0 0 21 20"><path d="M9 2.5H2v15h15v-6" fill="none" stroke="#3c4043" stroke-width="1.9"/><path d="M4.5 15l3.5-4.5 2.5 3 2-2 2.5 3.5z" fill="#3c4043"/><circle cx="15" cy="5.5" r="3.3" fill="none" stroke="#3c4043" stroke-width="1.8"/><path d="M17.3 8l2.5 2.5" stroke="#3c4043" stroke-width="1.9"/></svg>
<div class="t rl" style="left:1542px;top:692px;width:60px">Stock</div>

<div class="t" style="left:1562px;top:729px;font-size:22px;font-weight:bold;color:#3c4043;letter-spacing:-1px">T<span style="font-size:16px">T</span></div>
<div class="t rl" style="left:1542px;top:758px;width:60px">Text</div>

<svg class="a" style="left:1563px;top:797px" width="20" height="17" viewBox="0 0 20 17"><rect x="1.2" y="1.2" width="17.6" height="14.6" rx="1.5" fill="none" stroke="#3c4043" stroke-width="1.9"/><path d="M4.5 8h4M10.5 8h5M4.5 11.5h7M13 11.5h2.5" stroke="#3c4043" stroke-width="1.6"/></svg>
<div class="t rl" style="left:1532px;top:823px;width:80px">Captions</div>

<svg class="a" style="left:1563px;top:862px" width="20" height="17" viewBox="0 0 20 17"><rect x="1.2" y="1.2" width="17.6" height="14.6" rx="1.5" fill="none" stroke="#1f1f1f" stroke-width="1.9"/><rect x="4" y="4.5" width="7" height="3" fill="#1f1f1f"/><rect x="4" y="9.5" width="7" height="3" fill="#1f1f1f"/><rect x="13" y="4.5" width="3" height="8" fill="#1f1f1f"/></svg>
<div class="t rl" style="left:1532px;top:889px;width:80px">Templates</div>

<svg class="a" style="left:1563px;top:926px" width="20" height="20" viewBox="0 0 20 20"><circle cx="8" cy="8" r="6" fill="none" stroke="#9aa0a6" stroke-width="1.6"/><path d="M16 10v8h-6" fill="none" stroke="#b0b4ba" stroke-width="1.4"/></svg>

<!-- caption -->
<div class="t" id="cap" style="left:724px;top:1035px;font-size:25px;font-style:italic;color:#3c4043;letter-spacing:-.16px">Sequences shortened. Results may vary.</div>
</body></html>
